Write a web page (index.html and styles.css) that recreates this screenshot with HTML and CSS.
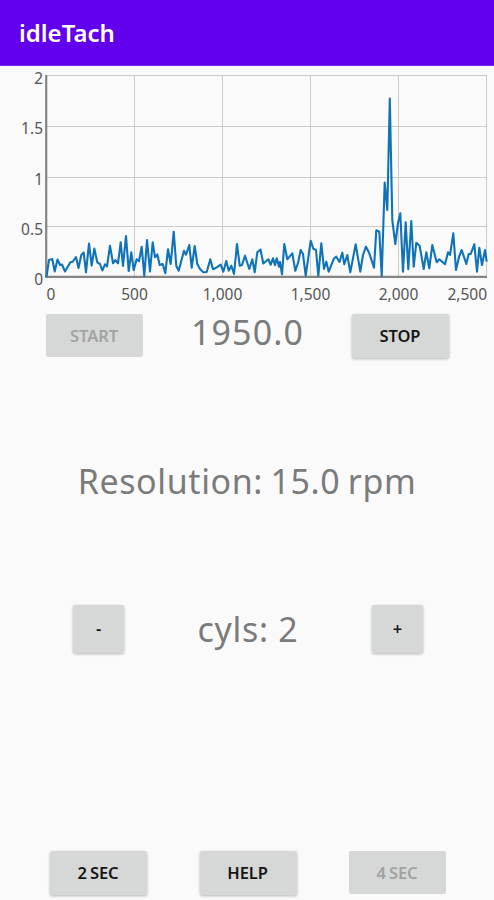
FILE: index.html
```html
<!DOCTYPE html>
<html lang="en">
<head>
<meta charset="utf-8">
<title>idleTach</title>
<link rel="stylesheet" href="styles.css">
</head>
<body>
<header class="bar"><h1 class="title">idleTach</h1></header>
<main class="screen">
<svg class="chart" viewBox="0 66 494 240" role="img" aria-label="Spectrum chart">
<path class="grid" d="M46 75.5H487M46 126.5H487M46 177.5H487M46 226.5H487M134.5 75V276M222.5 75V276M310.5 75V276M398.5 75V276M486.5 75V276"/>
<path class="axis" d="M46.2 75V277M45 276.8H487"/>
<path class="line" d="M46.5 276.5L49 260L52.3 259L54.7 271.5L57.5 259.5L60 265L62 264.5L65 271.5L70.5 262L72.5 262L76 257L78.5 268L81.3 255L83.7 252.5L86 272.5L89 243.5L91.7 265.5L94.3 248.5L97.3 262.3L100 264L102.3 270.5L105 264.3L107 266.5L110 245.7L113 263.3L115.3 260L118 263.3L120.7 242.3L123 266L126 236L128.7 271L131.3 252.3L133.7 270L136.7 259.3L139 261.3L141.7 246.7L144.3 276L147 240L150 271.5L152.7 242.3L155 257.3L157.3 254.3L159.7 265L162.7 264L165.3 273.3L168 249.3L170.7 264L173.7 231.7L176.3 266L178.7 270.7L184 250.7L186 254.7L189.3 245L191.7 267.7L194.7 246L197.3 264L200 269L203.3 272.3L206.7 272L210.3 259.3L213 269.3L216.7 267.3L220.7 264.7L223.3 271.7L226.3 261L228.7 270.7L231.3 265.7L234 274L237 244L239.7 265.7L242 265L245 255.7L249.3 269L252.3 259.3L254.7 272.3L257.3 252.3L260.5 249.5L263.3 263.5L268.3 259.3L270.7 264.7L273 258.3L275 265.3L276.7 258.3L279 266.7L280 262L282 274.3L284.3 244L287.3 259.3L292.3 253.3L295.3 270.7L298 263L300.7 250L303 254L305.7 275.7L310.7 240.7L313.3 248.7L316 250L318.3 276L321.3 243.3L324 269L326.3 261.7L328.7 271.7L334 258.3L336.3 256.7L339.5 262L342.3 252.7L344.3 264.3L347.3 255L350.3 272.3L355.7 244.3L360.3 271.7L363 255L366 246.7L369.3 253.3L374 267.7L376.3 230.3L379.3 231.7L381.7 276L384.7 182.5L387.3 210L389.8 98.5L392.3 220L395.3 244L398 223L400.3 213.3L403 271.7L405.7 222.3L408.3 269.3L411.3 221L413.7 266.7L416.3 242.7L419.7 246L423.7 269L426.3 252.3L429.3 268.3L432.3 245L436.7 262.3L439.3 259.3L445 264.3L448 252.3L450 255L453.3 233.3L456 270L459 257L461.7 250L466.3 264L468.7 254L470.7 254L474.3 244.3L477 271.7L479.3 247.7L482 265L485 250L486.7 261.7"/>
<g class="label end"><text x="43" y="84">2</text><text x="43" y="134">1.5</text><text x="43" y="185">1</text><text x="43" y="235">0.5</text><text x="43" y="285">0</text></g>
<g class="label mid"><text x="51" y="300">0</text><text x="134.5" y="300">500</text><text x="222.5" y="300">1,000</text><text x="310.5" y="300">1,500</text><text x="398.5" y="300">2,000</text></g>
<text class="label end" x="487" y="300">2,500</text>
</svg>
<section class="row controls"><button class="btn" disabled>START</button><output class="value rpm">1950.0</output><button class="btn">STOP</button></section>
<p class="value resolution">Resolution: 15.0 rpm</p>
<section class="row cylinders"><button class="btn small">-</button><output class="value cyls">cyls: 2</output><button class="btn small">+</button></section>
<footer class="row durations"><button class="btn">2 SEC</button><button class="btn">HELP</button><button class="btn" disabled>4 SEC</button></footer>
</main>
</body>
</html>
```

FILE: styles.css
```css
* { box-sizing: border-box; }
body { margin: 0; height: 900px; overflow: hidden; display: flex; flex-direction: column; background: #fafafa; font-family: "Noto Sans", "Open Sans", sans-serif; }
.bar { height: 66px; flex: none; display: flex; align-items: center; padding: 0 19px; background: #6200ee; border-bottom: 1px solid #7a2cf0; }
.title { margin: 0; font-size: 24px; line-height: 30px; font-weight: 600; color: #fff; }
.screen { flex: 1; display: flex; flex-direction: column; }
.chart { display: block; width: 494px; height: 240px; flex: none; }
.grid { fill: none; stroke: #cacaca; stroke-width: 1; }
.axis { fill: none; stroke: #858585; stroke-width: 2.2; }
.line { fill: none; stroke: #0f73b7; stroke-width: 2.1; stroke-linejoin: round; }
.label { font-size: 15.5px; fill: #555; }
.end { text-anchor: end; }
.mid { text-anchor: middle; }
.row { display: flex; justify-content: space-between; align-items: flex-start; }
.btn { width: 97px; height: 44px; padding: 0 0 1px; border: 0; border-radius: 2px; background: #d6d8d7; box-shadow: 0 1px 3px rgba(0,0,0,.28); font-family: inherit; font-size: 16.5px; font-weight: 600; letter-spacing: -0.1px; word-spacing: -1px; color: #161616; }
.btn:not(.small) { padding-right: 1px; }
.btn:disabled { height: 43px; padding-bottom: 0; color: #a1a3a2; box-shadow: none; }
.small { width: 51px; height: 48px; }
.value { margin: 0; color: #7b7b7b; font-size: 34px; line-height: 40px; font-weight: 400; white-space: nowrap; }
.controls { margin-top: 8px; height: 44px; padding: 0 45px 0 46px; }
.rpm { margin-top: -2px; letter-spacing: 1.1px; }
.resolution { margin-top: 103px; height: 41px; text-align: center; letter-spacing: 0.6px; word-spacing: -2px; }
.cylinders { margin-top: 103px; height: 48px; padding: 0 71px 0 73px; }
.cyls { margin-top: 4px; letter-spacing: 0.7px; }
.durations { margin-top: 198px; padding: 0 48px 0 50px; }
```
